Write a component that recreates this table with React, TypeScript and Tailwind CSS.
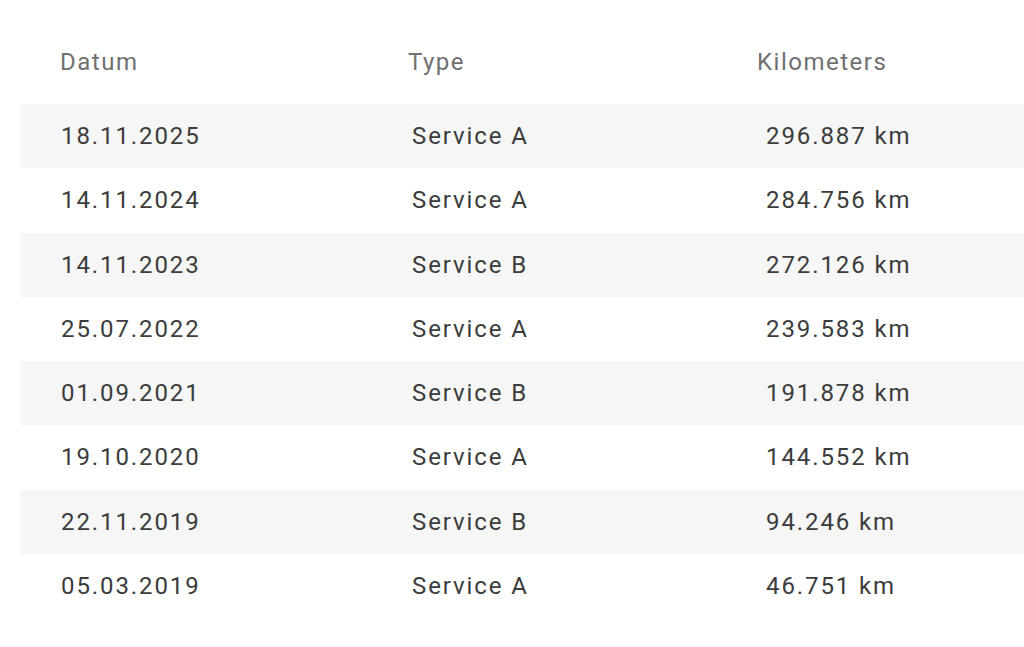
import React from "react";

const rows = [
  ["18.11.2025", "Service A", "296.887 km"],
  ["14.11.2024", "Service A", "284.756 km"],
  ["14.11.2023", "Service B", "272.126 km"],
  ["25.07.2022", "Service A", "239.583 km"],
  ["01.09.2021", "Service B", "191.878 km"],
  ["19.10.2020", "Service A", "144.552 km"],
  ["22.11.2019", "Service B", "94.246 km"],
  ["05.03.2019", "Service A", "46.751 km"],
];

export default function App() {
  return (
    <div
      className="w-[1024px] h-[647px] bg-white pl-[20px] overflow-hidden"
      style={{ fontFamily: "Roboto, 'Liberation Sans', sans-serif" }}
    >
      <div className="grid grid-cols-[348px_349px_1fr] h-[104px] pt-[20px] items-center text-[24px] tracking-[1.5px] text-[#707070]">
        <div className="pl-[40px]">Datum</div>
        <div className="pl-[40px]">Type</div>
        <div className="pl-[40px]">Kilometers</div>
      </div>
      {rows.map((r, i) => (
        <div
          key={i}
          className={`grid grid-cols-[348px_349px_1fr] h-[64.25px] items-center text-[24px] tracking-[1.9px] text-[#3c3c3c] ${
            i % 2 === 0 ? "bg-[#f6f6f6]" : "bg-white"
          }`}
        >
          <div className="pl-[41px]">{r[0]}</div>
          <div className="pl-[44px]">{r[1]}</div>
          <div className="pl-[49px]">{r[2]}</div>
        </div>
      ))}
    </div>
  );
}
